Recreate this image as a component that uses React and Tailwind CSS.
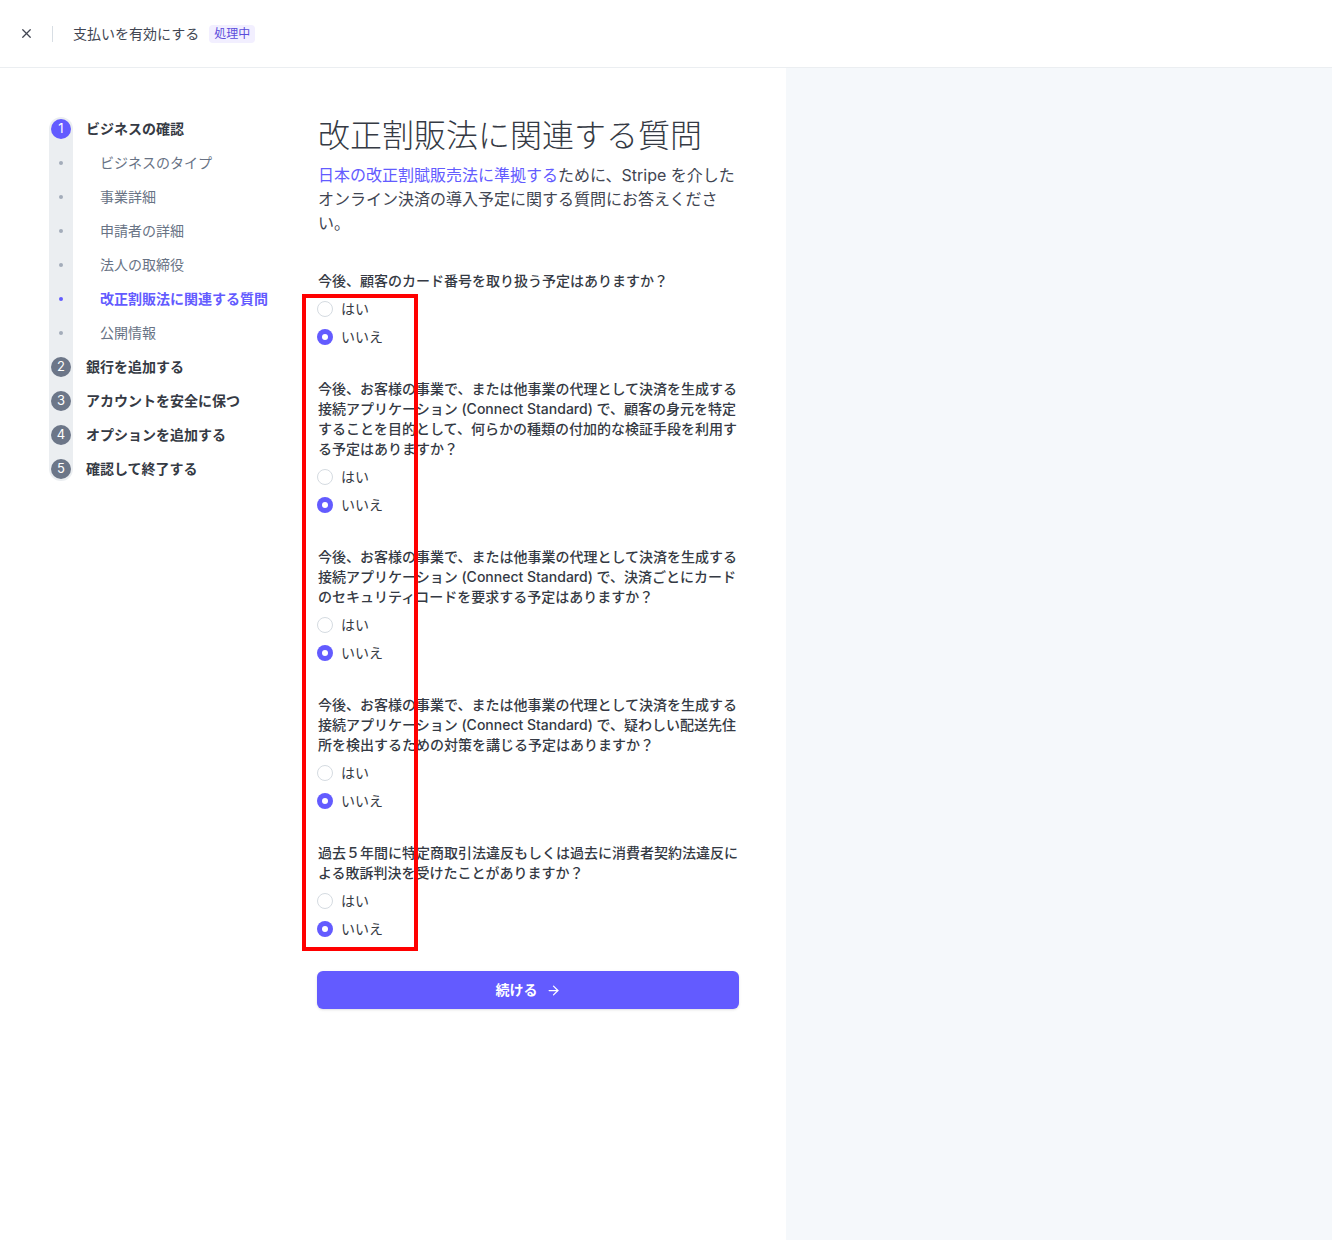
import React from 'react';
import { X, ArrowRight } from 'lucide-react';

const font = { fontFamily: '"Inter", "Noto Sans CJK JP", sans-serif' };

const steps = [
  { type: 'step', num: 1, label: 'ビジネスの確認', active: true },
  { type: 'sub', label: 'ビジネスのタイプ' },
  { type: 'sub', label: '事業詳細' },
  { type: 'sub', label: '申請者の詳細' },
  { type: 'sub', label: '法人の取締役' },
  { type: 'sub', label: '改正割販法に関連する質問', active: true },
  { type: 'sub', label: '公開情報' },
  { type: 'step', num: 2, label: '銀行を追加する' },
  { type: 'step', num: 3, label: 'アカウントを安全に保つ' },
  { type: 'step', num: 4, label: 'オプションを追加する' },
  { type: 'step', num: 5, label: '確認して終了する' },
];

const questions = [
  '今後、顧客のカード番号を取り扱う予定はありますか？',
  '今後、お客様の事業で、または他事業の代理として決済を生成する接続アプリケーション (Connect Standard) で、顧客の身元を特定することを目的として、何らかの種類の付加的な検証手段を利用する予定はありますか？',
  '今後、お客様の事業で、または他事業の代理として決済を生成する接続アプリケーション (Connect Standard) で、決済ごとにカードのセキュリティコードを要求する予定はありますか？',
  '今後、お客様の事業で、または他事業の代理として決済を生成する接続アプリケーション (Connect Standard) で、疑わしい配送先住所を検出するための対策を講じる予定はありますか？',
  '過去５年間に特定商取引法違反もしくは過去に消費者契約法違反による敗訴判決を受けたことがありますか？',
];

const Radio = ({ checked, label }) => (
  <div className="flex items-center h-[28px] -ml-px">
    {checked ? (
      <span className="w-4 h-4 rounded-full bg-[#635bff] flex items-center justify-center">
        <span className="w-[6px] h-[6px] rounded-full bg-white" />
      </span>
    ) : (
      <span className="w-4 h-4 rounded-full bg-white border border-[#d5dbe1]" />
    )}
    <span className="ml-2 text-sm text-[#353a44]">{label}</span>
  </div>
);

const Sidebar = () => (
  <div className="relative w-[269px] shrink-0 self-start">
    <div className="absolute left-0 top-[5px] bottom-[5px] w-6 rounded-full bg-[#ebeef1]" />
    <div className="relative flex flex-col">
      {steps.map((s, i) => (
        <div key={i} className="flex items-center h-[34px]">
          <div className="w-6 flex items-center justify-center">
            {s.type === 'step' ? (
              <span
                className={`w-5 h-5 rounded-full flex items-center justify-center text-[13px] text-white ${
                  s.active ? 'bg-[#635bff]' : 'bg-[#6c7688]'
                }`}
              >
                {s.num}
              </span>
            ) : (
              <span className={`w-1 h-1 rounded-full ${s.active ? 'bg-[#635bff]' : 'bg-[#a3acba]'}`} />
            )}
          </div>
          {s.type === 'step' ? (
            <span className="ml-[13px] text-sm font-bold text-[#353a44]">{s.label}</span>
          ) : (
            <span
              className={`ml-[27px] text-sm ${
                s.active ? 'font-bold text-[#635bff]' : 'text-[#687385]'
              }`}
            >
              {s.label}
            </span>
          )}
        </div>
      ))}
    </div>
  </div>
);

const App = () => {
  return (
    <div className="relative w-full h-[1240px] bg-white flex flex-col overflow-hidden" style={font}>
      <header className="h-[68px] shrink-0 border-b border-[#ebeef1] flex items-center">
        <div className="w-[52px] flex justify-center pl-[1px]">
          <X size={15} strokeWidth={2} className="text-[#414552]" />
        </div>
        <div className="w-px h-4 bg-[#d8dee4]" />
        <span className="ml-5 text-sm text-[#414552]">支払いを有効にする</span>
        <span className="ml-[10px] px-[5px] h-[18px] flex items-center rounded bg-[#f2efff] text-xs text-[#5b4cdb]">
          処理中
        </span>
      </header>

      <div className="flex flex-1">
        <div className="w-[786px] shrink-0 flex items-start pl-[49px] pt-[44px]">
          <Sidebar />
          <main className="w-[422px] pt-[4px]">
            <h1 className="text-[32px] leading-[40px] font-light text-[#353a44]">改正割販法に関連する質問</h1>
            <p className="mt-[7px] text-base leading-6 text-[#414552]">
              <span className="text-[#635bff]">日本の改正割賦販売法に準拠する</span>
              ために、Stripe を介したオンライン決済の導入予定に関する質問にお答えください。
            </p>
            <div className="mt-9 flex flex-col gap-7">
              {questions.map((q, i) => (
                <div key={i}>
                  <p className="text-sm leading-5 font-medium text-[#353a44]">{q}</p>
                  <div className="mt-1">
                    <Radio label="はい" />
                    <Radio checked label="いいえ" />
                  </div>
                </div>
              ))}
            </div>
            <button className="mt-7 -ml-px w-[422px] h-[38px] rounded-md bg-[#635bff] text-white text-sm font-semibold flex items-center justify-center gap-2 shadow-sm">
              続ける
              <ArrowRight size={15} strokeWidth={2} />
            </button>
          </main>
        </div>
        <div className="flex-1 bg-[#f5f8fb]" />
      </div>

      <div className="absolute left-[302px] top-[294px] w-[116px] h-[657px] border-4 border-[#ff0000] pointer-events-none" />
    </div>
  );
};

export default App;
